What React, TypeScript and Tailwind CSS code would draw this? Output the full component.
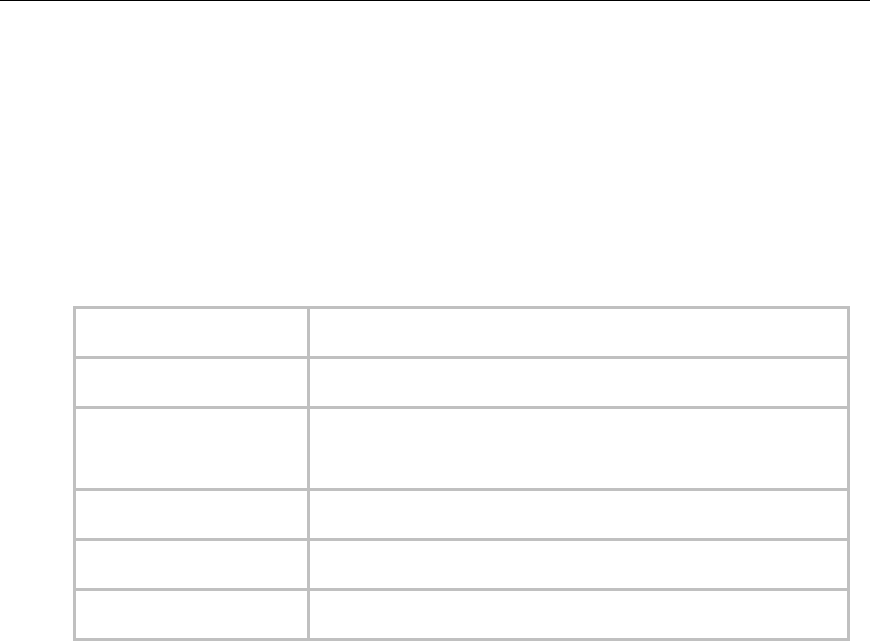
import React from "react";

const rows = [47, 47, 79, 47, 47, 47];

export default function App() {
  return (
    <div className="w-[870px] h-[641px] bg-white overflow-hidden">
      <div className="h-px bg-black w-full" />
      <div className="ml-[73px] mt-[305px] w-[777px] border-[3px] border-[#c0c0c0] flex flex-col">
        {rows.map((h, i) => (
          <div
            key={i}
            className={`flex ${i > 0 ? "border-t-[3px] border-[#c0c0c0]" : ""}`}
          >
            <div
              className="w-[234px] border-r-[3px] border-[#c0c0c0] shrink-0"
              style={{ height: h }}
            />
            <div className="flex-1" style={{ height: h }} />
          </div>
        ))}
      </div>
    </div>
  );
}
